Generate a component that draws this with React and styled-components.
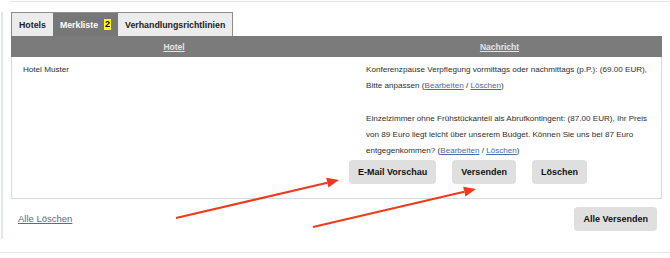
import React from 'react'
import styled, { createGlobalStyle } from 'styled-components'

const Global = createGlobalStyle`
  html, body { margin: 0; padding: 0; background: #fff; }
  body { font-family: "Liberation Sans", Arial, sans-serif; color: #333; }
`

const Page = styled.div`
  position: relative;
  width: 670px;
  height: 258px;
  padding-top: 1px;
  box-sizing: border-box;
`

const Rule = styled.div`
  height: 1px;
  background: #e3e6ec;
  margin-left: ${p => p.$indent || 0}px;
  margin-top: ${p => p.$top || 0}px;
`

const Panel = styled.div`
  margin: 10px 0 0 1px;
  border-left: 2px solid #e1e6ef;
  padding: 0 8px 8px 8px;
`

const Tabs = styled.div`
  display: inline-flex;
  border: 1px solid #8d8d8d;
  border-bottom: none;
  height: 23px;
`

const Tab = styled.div`
  display: flex;
  align-items: center;
  gap: 6px;
  padding: 0 7px;
  font-size: 8.8px;
  font-weight: bold;
  background: ${p => (p.$active ? '#777' : '#ececec')};
  color: ${p => (p.$active ? '#fff' : '#222')};
`

const Badge = styled.span`
  background: #ffff00;
  color: #000;
  padding: 1px 1px;
  line-height: 9px;
  font-size: 9px;
`

const Grid = styled.div`
  display: grid;
  grid-template-columns: 326px 1fr;
`

const Head = styled(Grid)`
  background: #7b7b7b;
  height: 21px;
  align-items: center;
  text-align: center;
  font-size: 8.5px;
  font-weight: bold;
  color: #e4e4e4;
  text-decoration: underline;
`

const Body = styled(Grid)`
  border: 1px solid #d6dbe4;
  border-top: none;
  font-size: 8.1px;
  line-height: 16.3px;
  color: #2e2e2e;
`

const Cell = styled.div`
  padding: 5px 11px 14px 11px;
`

const Message = styled.div`
  padding-left: 17px;
  white-space: nowrap;
  p { margin: 0 0 16.3px; }
  p:last-child { margin: 0; }
`

const TextLink = styled.a`
  color: ${p => p.$muted ? '#5b6c8b' : '#4b6aa3'};
  text-decoration: underline;
  font-size: ${p => p.$size || 'inherit'};
`

const Buttons = styled.div`
  display: flex;
  gap: 16px;
`

const Button = styled.button`
  height: 24px;
  padding: 0 9px;
  border: none;
  border-radius: 4px;
  background: #dfdfdf;
  color: #111;
  font-family: inherit;
  font-size: 9px;
  font-weight: bold;
`

const Footer = styled.div`
  display: flex;
  justify-content: space-between;
  align-items: center;
  margin-top: 8px;
  padding: 0 5px 0 7px;
`

const Arrows = styled.svg`
  position: absolute;
  left: 0;
  top: 0;
  pointer-events: none;
`

function Arrow({ x1, y1, x2, y2 }) {
  const a = Math.atan2(y2 - y1, x2 - x1)
  const len = 12
  const w = 5
  const bx = x2 - Math.cos(a) * len
  const by = y2 - Math.sin(a) * len
  const px = -Math.sin(a) * w
  const py = Math.cos(a) * w
  return (
    <g fill="#f1391d" stroke="#f1391d">
      <line x1={x1} y1={y1} x2={bx} y2={by} strokeWidth="2.2" />
      <polygon points={`${x2},${y2} ${bx + px},${by + py} ${bx - px},${by - py}`} stroke="none" />
    </g>
  )
}

export default function App() {
  return (
    <Page>
      <Global />
      <Rule $indent={10} />
      <Panel>
        <Tabs>
          <Tab>Hotels</Tab>
          <Tab $active>Merkliste <Badge>2</Badge></Tab>
          <Tab>Verhandlungsrichtlinien</Tab>
        </Tabs>
        <Head>
          <div>Hotel</div>
          <div>Nachricht</div>
        </Head>
        <Body>
          <Cell>Hotel Muster</Cell>
          <Cell>
            <Message>
              <p>
                Konferenzpause Verpflegung vormittags oder nachmittags (p.P.): (69.00 EUR),<br />
                Bitte anpassen (<TextLink href="#">Bearbeiten</TextLink> / <TextLink href="#">Löschen</TextLink>)
              </p>
              <p>
                Einzelzimmer ohne Frühstückanteil als Abrufkontingent: (87.00 EUR), Ihr Preis<br />
                von 89 Euro liegt leicht über unserem Budget. Können Sie uns bei 87 Euro<br />
                entgegenkommen? (<TextLink href="#">Bearbeiten</TextLink> / <TextLink href="#">Löschen</TextLink>)
              </p>
            </Message>
            <Buttons>
              <Button>E-Mail Vorschau</Button>
              <Button>Versenden</Button>
              <Button>Löschen</Button>
            </Buttons>
          </Cell>
        </Body>
        <Footer>
          <TextLink href="#" $muted $size="9.5px">Alle Löschen</TextLink>
          <Button>Alle Versenden</Button>
        </Footer>
      </Panel>
      <Rule $top={13} />
      <Arrows width="670" height="258">
        <Arrow x1={176} y1={218} x2={339} y2={180} />
        <Arrow x1={313} y1={227} x2={476} y2={189} />
      </Arrows>
    </Page>
  )
}
